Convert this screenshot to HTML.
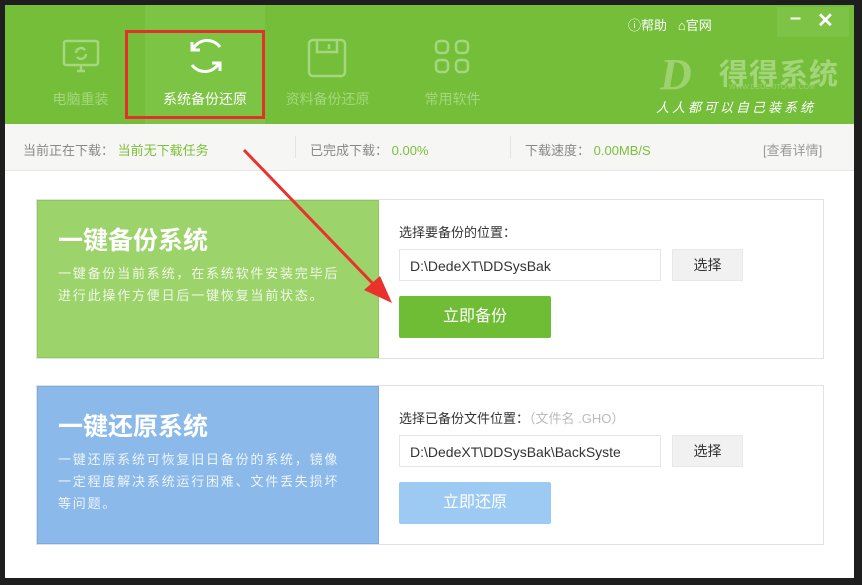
<!DOCTYPE html>
<html><head><meta charset="utf-8"><style>
*{margin:0;padding:0;box-sizing:border-box}
body{width:862px;height:585px;background:#1e1e1e;position:relative;overflow:hidden;font-family:"Liberation Sans","Noto Sans CJK SC",sans-serif}
.win{position:absolute;left:5px;top:5px;width:849px;height:573px;background:#fff}
.hdr{position:absolute;left:0;top:0;width:849px;height:119px;background:#74be3a}
.a{position:absolute}
.tab{position:absolute;top:0;height:119px;text-align:center;color:#a5d77e;font-size:14px}
.tab span{position:absolute;left:0;right:0;top:84px}
.status{position:absolute;left:0;top:119px;width:849px;height:47px;background:#f6f7f5;border-bottom:1px solid #e6e6e6;font-size:13px;color:#888}
.status div{position:absolute;top:16px}
.g{color:#7cbf3a}
.box{position:absolute;left:31px;width:788px;border:1px solid #e2e2e2;background:#fff}
.lp{position:absolute;left:0;top:0;width:342px;height:100%;color:#fff}
.lp h2{position:absolute;left:20px;top:20px;font-size:25px;font-weight:bold}
.lp p{position:absolute;left:20px;top:62px;font-size:13px;line-height:22px;width:330px;white-space:nowrap;opacity:.85;letter-spacing:1.8px}
.lbl{position:absolute;left:362px;font-size:13px;color:#333}
.inp{position:absolute;left:362px;width:262px;height:32px;border:1px solid #e6e6e6;font-size:14px;color:#333;padding:8px 0 0 10px;white-space:nowrap;overflow:hidden}
.sel{position:absolute;left:635px;width:71px;height:32px;background:#f1f1f1;border:1px solid #e8e8e8;font-size:14px;color:#333;text-align:center;line-height:30px}
.btn{position:absolute;left:362px;width:152px;height:42px;color:#fff;font-size:16px;text-align:center;line-height:42px;border-radius:2px}
</style></head><body>
<div class="win">
<div class="hdr">
 <div class="a" style="left:140px;top:0;width:120px;height:119px;background:#7cc444"></div>
 <div class="tab" style="left:28px;width:95px">
  <svg class="a" style="left:29px;top:33px" width="38" height="38" viewBox="0 0 38 38" fill="none" stroke="#a5d77e" stroke-width="2.5"><rect x="2" y="3" width="34" height="24" rx="2"/><path d="M15 33h8M19 27v6"/><path d="M14 15a5 5 0 0 1 9-3M24 16a5 5 0 0 1-9 3"/></svg>
  <span>电脑重装</span></div>
 <div class="tab" style="left:150px;width:100px;color:#fff">
  <svg class="a" style="left:30px;top:30px" width="42" height="42" viewBox="0 0 42 42" fill="none" stroke="#fff" stroke-width="3"><path d="M8 14 A16 16 0 0 1 35 12M7 7v8h8"/><path d="M34 28 A16 16 0 0 1 7 30M35 36v-8h-8"/></svg>
  <span>系统备份还原</span></div>
 <div class="tab" style="left:275px;width:95px">
  <svg class="a" style="left:27px;top:33px" width="40" height="40" viewBox="0 0 40 40" fill="none" stroke="#a5d77e" stroke-width="2.5"><rect x="2" y="2" width="36" height="36" rx="4"/><path d="M10 2v12h20V2M22 6v5"/></svg>
  <span>资料备份还原</span></div>
 <div class="tab" style="left:400px;width:95px">
  <svg class="a" style="left:28px;top:33px" width="38" height="38" viewBox="0 0 38 38" fill="none" stroke="#a5d77e" stroke-width="2.5"><rect x="3" y="3" width="12" height="12" rx="4"/><rect x="23" y="3" width="12" height="12" rx="4"/><rect x="3" y="22" width="12" height="12" rx="4"/><rect x="23" y="22" width="12" height="12" rx="4"/></svg>
  <span>常用软件</span></div>
 <div class="a" style="left:623px;top:10px;color:#fff;font-size:13px">ⓘ帮助&nbsp;&nbsp;&nbsp;⌂官网</div>
 <div class="a" style="left:772px;top:2px;width:72px;height:30px;background:#7dc446"></div>
 <div class="a" style="left:785px;top:2px;color:#fff;font-size:20px;font-weight:bold">–</div>
 <div class="a" style="left:812px;top:3px;color:#fff;font-size:20px;font-weight:bold">✕</div>
 <div class="a" style="left:655px;top:44px;color:#9ed16f;font-size:44px;font-style:italic;font-weight:bold;font-family:'Liberation Serif',serif">D</div>
 <div class="a" style="left:714px;top:46px;color:#a3d57a;font-size:29px;font-weight:bold;letter-spacing:1px">得得系统</div>
 <div class="a" style="left:724px;top:79px;color:#9ed16f;font-size:7px">WWW.DEDEXITONG.COM</div>
 <div class="a" style="left:651px;top:92px;color:#fff;font-size:13px;font-style:italic;letter-spacing:3px">人人都可以自己装系统</div>
</div>
<div class="status">
 <div style="left:18px">当前正在下载： <span class="g">当前无下载任务</span></div>
 <div style="left:290px;top:12px;width:1px;height:22px;background:#e3e3e3"></div>
 <div style="left:305px">已完成下载： <span class="g">0.00%</span></div>
 <div style="left:505px;top:12px;width:1px;height:22px;background:#e3e3e3"></div>
 <div style="left:520px">下载速度： <span class="g">0.00MB/S</span></div>
 <div style="left:758px;color:#999">[查看详情]</div>
</div>
<div class="box" style="top:194px;height:160px">
 <div class="lp" style="background:#9cd36a;border:1px solid #8cc85a"><h2>一键备份系统</h2><p>一键备份当前系统，在系统软件安装完毕后<br>进行此操作方便日后一键恢复当前状态。</p></div>
 <div class="lbl" style="top:22px">选择要备份的位置：</div>
 <div class="inp" style="top:49px">D:\DedeXT\DDSysBak</div>
 <div class="sel" style="top:49px">选择</div>
 <div class="btn" style="top:96px;background:#6fbc35">立即备份</div>
</div>
<div class="box" style="top:380px;height:160px">
 <div class="lp" style="background:#8bb9ea;border:1px solid #7aace3"><h2>一键还原系统</h2><p>一键还原系统可恢复旧日备份的系统，镜像<br>一定程度解决系统运行困难、文件丢失损坏<br>等问题。</p></div>
 <div class="lbl" style="top:22px">选择已备份文件位置：<span style="color:#bbb">（文件名 .GHO）</span></div>
 <div class="inp" style="top:49px">D:\DedeXT\DDSysBak\BackSyste</div>
 <div class="sel" style="top:49px">选择</div>
 <div class="btn" style="top:96px;background:#9ccaf2">立即还原</div>
</div>
</div>
<div class="a" style="left:125px;top:30px;width:140px;height:89px;border:3px solid #e2302a"></div>
<svg class="a" style="left:0;top:0" width="862" height="585"><line x1="244" y1="150" x2="378" y2="289" stroke="#e8322b" stroke-width="3"/><polygon points="392,303 364,290 380,276" fill="#e8322b"/></svg>
</body></html>
